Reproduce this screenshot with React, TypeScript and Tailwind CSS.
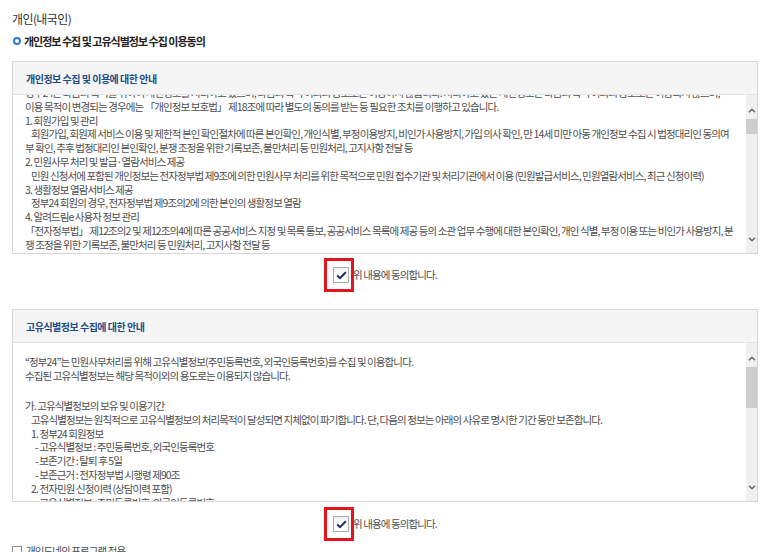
import React from 'react';

type Line = { text: string; indent?: 0 | 1 | 2; gap?: boolean };

const privacyLines: Line[] = [
  { text: '정부24는 다음의 목적을 위하여 개인정보를 처리하고 있으며, 다음의 목적 이외의 용도로는 이용하지 않습니다. 처리하고 있는 개인정보는 다음의 목적 이외의 용도로는 이용되지 않으며,' },
  { text: '이용 목적이 변경되는 경우에는 「개인정보 보호법」 제18조에 따라 별도의 동의를 받는 등 필요한 조치를 이행하고 있습니다.' },
  { text: '1. 회원가입 및 관리' },
  { text: '회원가입, 회원제 서비스 이용 및 제한적 본인 확인절차에 따른 본인확인, 개인식별, 부정이용방지, 비인가 사용방지, 가입 의사 확인, 만 14세 미만 아동 개인정보 수집 시 법정대리인 동의여', indent: 1 },
  { text: '부 확인, 추후 법정대리인 본인확인, 분쟁 조정을 위한 기록보존, 불만처리 등 민원처리, 고지사항 전달 등' },
  { text: '2. 민원사무 처리 및 발급·열람서비스 제공' },
  { text: '민원 신청서에 포함된 개인정보는 전자정부법 제9조에 의한 민원사무 처리를 위한 목적으로 민원 접수기관 및 처리기관에서 이용 (민원발급서비스, 민원열람서비스, 최근 신청이력)', indent: 1 },
  { text: '3. 생활정보 열람서비스 제공' },
  { text: '정부24 회원의 경우, 전자정부법 제9조의2에 의한 본인의 생활정보 열람', indent: 1 },
  { text: '4. 알려드림e 사용자 정보 관리' },
  { text: '「전자정부법」 제12조의2 및 제12조의4에 따른 공공서비스 지정 및 목록 통보, 공공서비스 목록에 제공 등의 소관 업무 수행에 대한 본인확인, 개인 식별, 부정 이용 또는 비인가 사용방지, 분' },
  { text: '쟁 조정을 위한 기록보존, 불만처리 등 민원처리, 고지사항 전달 등' },
];

const uniqueIdLines: Line[] = [
  { text: '“정부24”는 민원사무처리를 위해 고유식별정보(주민등록번호, 외국인등록번호)를 수집 및 이용합니다.' },
  { text: '수집된 고유식별정보는 해당 목적이외의 용도로는 이용되지 않습니다.' },
  { text: '', gap: true },
  { text: '가. 고유식별정보의 보유 및 이용기간' },
  { text: '고유식별정보는 원칙적으로 고유식별정보의 처리목적이 달성되면 지체없이 파기합니다. 단, 다음의 정보는 아래의 사유로 명시한 기간 동안 보존합니다.', indent: 1 },
  { text: '1. 정부24 회원정보', indent: 1 },
  { text: '- 고유식별정보 : 주민등록번호, 외국인등록번호', indent: 2 },
  { text: '- 보존기간 : 탈퇴 후 5일', indent: 2 },
  { text: '- 보존근거 : 전자정부법 시행령 제90조', indent: 2 },
  { text: '2. 전자민원 신청이력 (상담이력 포함)', indent: 1 },
  { text: '- 고유식별정보 : 주민등록번호, 외국인등록번호', indent: 2 },
  { text: '- 보존기간 : 3년', indent: 2 },
];

const Chevron = ({ down = false }: { down?: boolean }) => (
  <svg width="8" height="5" viewBox="0 0 8 5" className={down ? 'rotate-180' : ''}>
    <path d="M1 4.2 L4 1.2 L7 4.2" fill="none" stroke="#5f5f5f" strokeWidth="1.4" />
  </svg>
);

const FakeScrollbar = ({ thumb }: { thumb: 'short' | 'long' }) => (
  <div className="flex w-[11px] flex-col bg-[#f0f0f0]">
    <div className="flex h-[24px] justify-center pt-[13px]">
      <Chevron />
    </div>
    <div className={`bg-[#cdcdcd] ${thumb === 'short' ? 'h-[15px]' : 'h-[41px]'}`} />
    <div className="flex-1" />
    <div className="flex h-[24px] items-end justify-center pb-[11px]">
      <Chevron down />
    </div>
  </div>
);

const NoticeBox = ({
  title,
  lines,
  offset,
  thumb,
}: {
  title: string;
  lines: Line[];
  offset: string;
  thumb: 'short' | 'long';
}) => (
  <div className="w-[746px] border border-[#d6d6d6]">
    <div className="flex h-[33px] items-center border-b border-[#e4e4e4] bg-[#f5f5f5] pl-[13px]">
      <span className="text-[10px] font-bold tracking-[-0.5px] text-[#1d4c86]">{title}</span>
    </div>
    <div className="flex h-[158px]">
      <div className="flex-1 overflow-hidden pl-[12px]">
        <div className={`${offset} text-[10.5px] leading-[13.8px] tracking-[-0.9px] text-[#4d4d4d]`}>
          {lines.map((line, i) => (
            <div
              key={i}
              className={`whitespace-nowrap ${line.gap ? 'h-[16.5px]' : 'h-[13.8px]'} ${
                line.indent === 1 ? 'pl-[6px]' : line.indent === 2 ? 'pl-[10px]' : ''
              }`}
            >
              {line.text}
            </div>
          ))}
        </div>
      </div>
      <FakeScrollbar thumb={thumb} />
    </div>
  </div>
);

const AgreeCheck = () => (
  <div className="flex w-[746px] justify-center">
    <label className="flex h-[16px] items-center gap-[4px]">
      <span className="relative flex h-[16px] w-[16px] items-center justify-center border border-[#a9a9a9] bg-gradient-to-b from-[#f3f3f3] to-white">
        <svg width="11" height="9" viewBox="0 0 11 9">
          <path d="M1.2 4.6 L4 7.2 L9.8 1.3" fill="none" stroke="#1f2a6e" strokeWidth="2" />
        </svg>
        <span className="absolute -left-[10px] -top-[10px] h-[34px] w-[30px] border-[3px] border-[#e3141c]" />
      </span>
      <span className="text-[10.5px] tracking-[-0.9px] text-[#4d4d4d]">위 내용에 동의합니다.</span>
    </label>
  </div>
);

export default function App() {
  return (
    <div className="h-[552px] w-[773px] overflow-hidden bg-white font-['Noto_Sans_CJK_KR',sans-serif]">
      <div className="pl-[12px] pt-[11px]">
        <div className="h-[16px] text-[12px] leading-[16px] tracking-[-0.6px] text-[#333]">개인(내국인)</div>
        <div className="mt-[6px] flex h-[16px] items-center gap-[3px]">
          <span className="ml-px h-[8px] w-[8px] rounded-full border-[2px] border-[#2a7ad6] bg-white" />
          <span className="text-[11px] font-bold tracking-[-1px] text-[#222]">
            개인정보 수집 및 고유식별정보 수집 이용동의
          </span>
        </div>

        <div className="mt-[12px]">
          <NoticeBox title="개인정보 수집 및 이용에 대한 안내" lines={privacyLines} offset="-mt-[9px]" thumb="short" />
        </div>
        <div className="mt-[13px]">
          <AgreeCheck />
        </div>

        <div className="mt-[26px]">
          <NoticeBox title="고유식별정보 수집에 대한 안내" lines={uniqueIdLines} offset="pt-[12px]" thumb="long" />
        </div>
        <div className="mt-[14px]">
          <AgreeCheck />
        </div>

        <div className="mt-[12px] flex h-[14px] items-center gap-[4px]">
          <span className="h-[10px] w-[10px] border border-[#8a8a8a]" />
          <span className="text-[10.5px] tracking-[-0.9px] text-[#4d4d4d]">개인도네의 프로그램 적용</span>
        </div>
      </div>
    </div>
  );
}
